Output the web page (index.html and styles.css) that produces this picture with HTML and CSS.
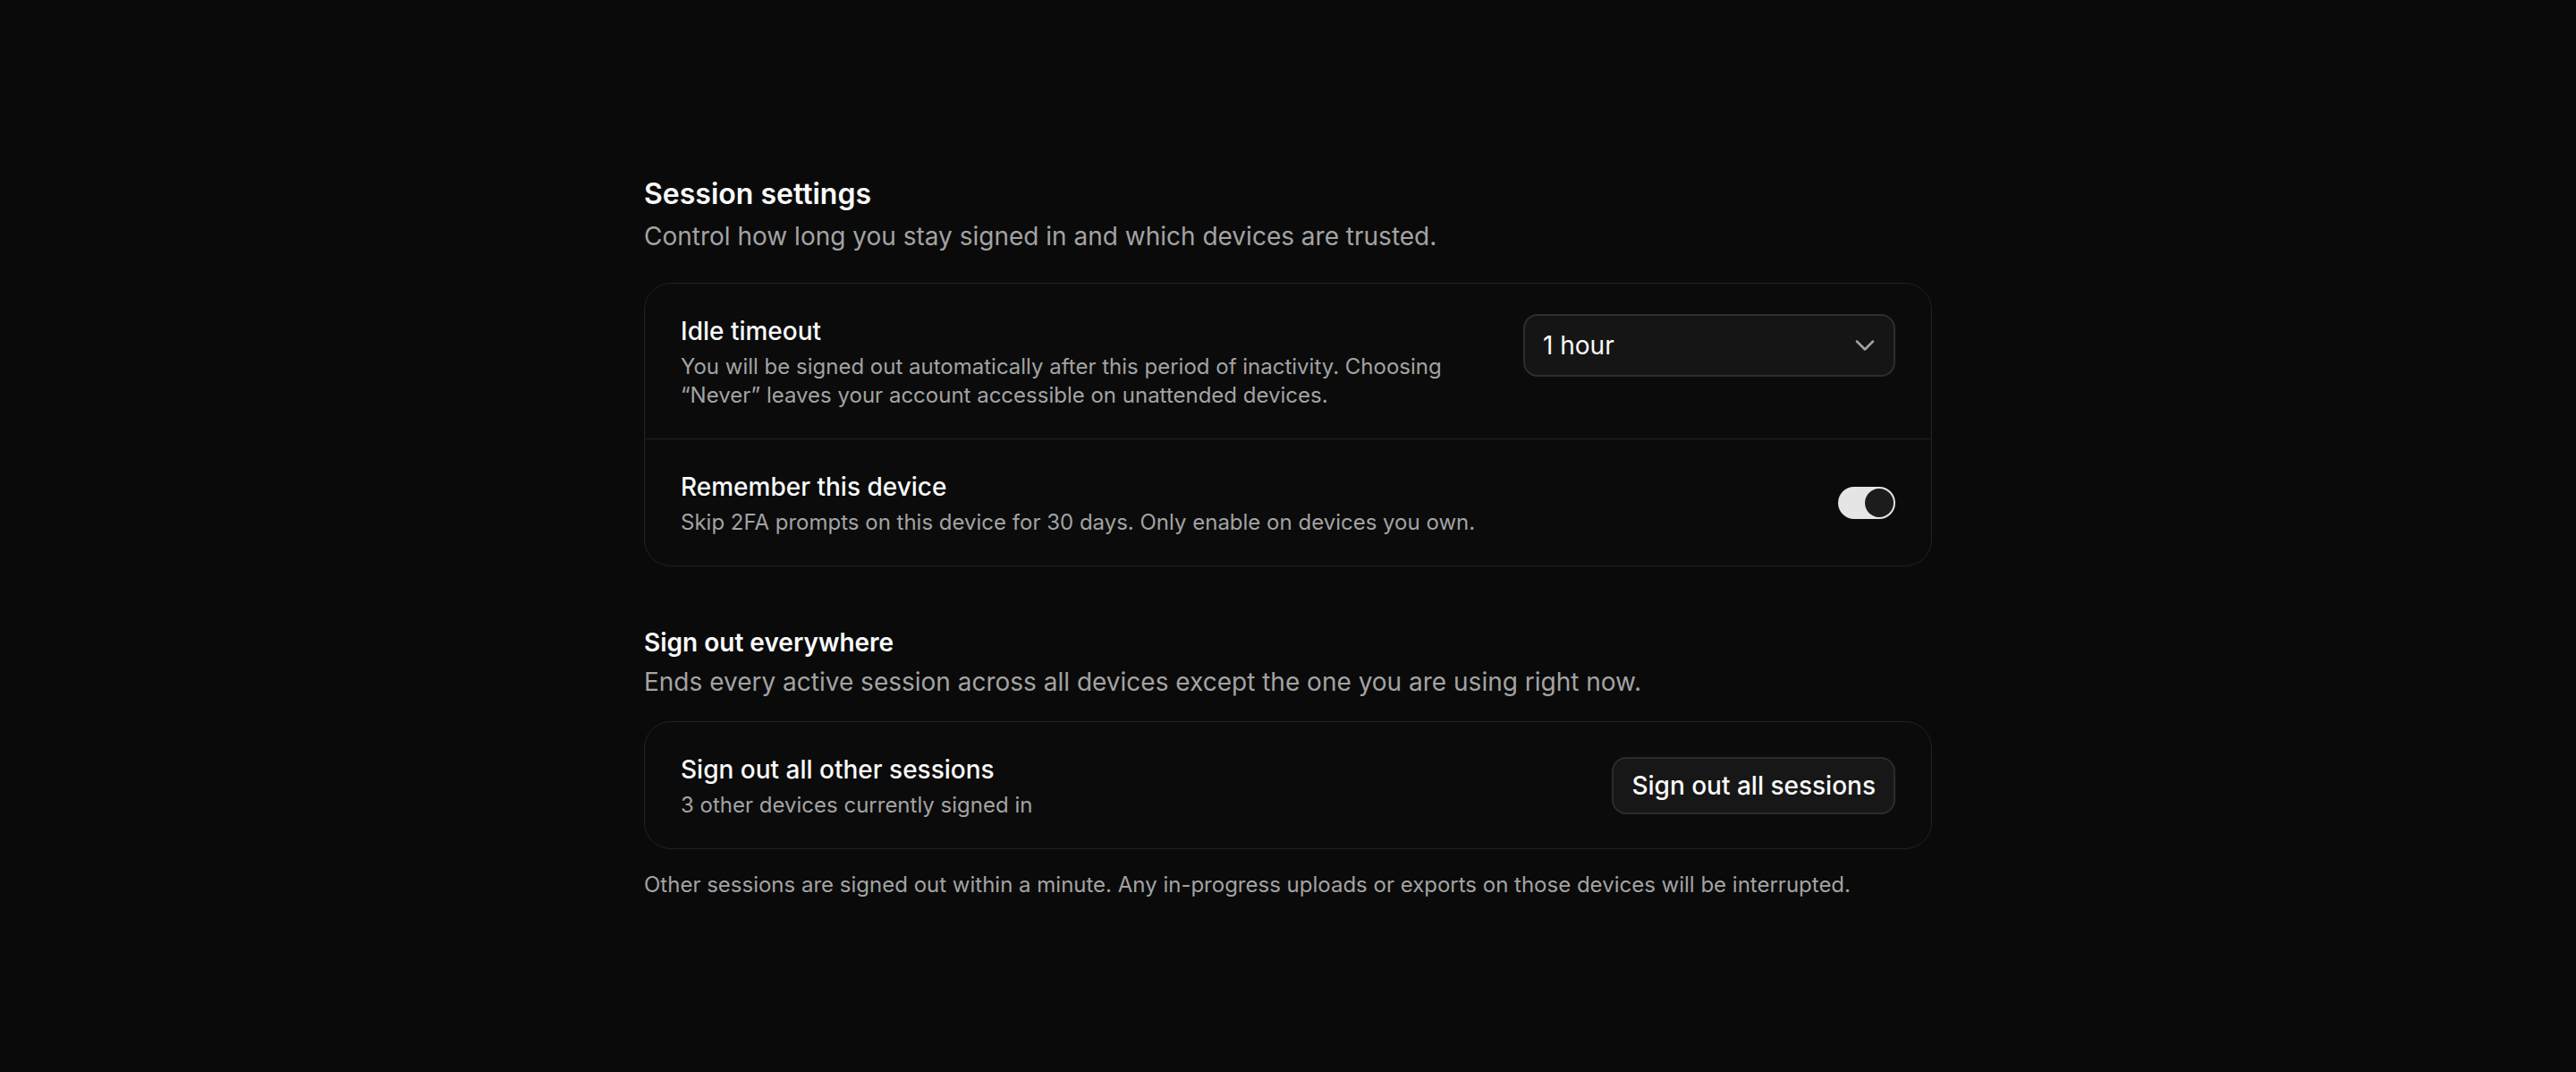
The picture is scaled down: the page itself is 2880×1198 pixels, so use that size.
FILE: index.html
```html
<!DOCTYPE html>
<html lang="en">
<head>
    <meta charset="UTF-8">
    <meta name="viewport" content="width=device-width, initial-scale=1.0">
    <title>Session settings</title>
    <link rel="stylesheet" href="styles.css">
</head>
<body>
<div class="page">

    <section class="section">
        <div class="section-head first">
            <h1 class="section-title">Session settings</h1>
            <p class="section-sub">Control how long you stay signed in and which devices are trusted.</p>
        </div>

        <div class="card">
            <div class="row row-top">
                <div class="row-text">
                    <div class="row-title">Idle timeout</div>
                    <div class="row-desc">You will be signed out automatically after this period of inactivity. Choosing “Never” leaves your account accessible on unattended devices.</div>
                </div>
                <div class="select">
                    <span>1 hour</span>
                    <svg width="36" height="36" viewBox="0 0 24 24" fill="none" stroke="currentColor" stroke-width="1.7" stroke-linecap="round" stroke-linejoin="round"><path d="m6 9 6 6 6-6"/></svg>
                </div>
            </div>
            <div class="row">
                <div class="row-text">
                    <div class="row-title">Remember this device</div>
                    <div class="row-desc">Skip 2FA prompts on this device for 30 days. Only enable on devices you own.</div>
                </div>
                <div class="toggle on"><span class="knob"></span></div>
            </div>
        </div>
    </section>

    <section class="section second">
        <div class="section-head">
            <h2 class="section-title small">Sign out everywhere</h2>
            <p class="section-sub">Ends every active session across all devices except the one you are using right now.</p>
        </div>

        <div class="card">
            <div class="row">
                <div class="row-text">
                    <div class="row-title">Sign out all other sessions</div>
                    <div class="row-desc">3 other devices currently signed in</div>
                </div>
                <button class="btn">Sign out all sessions</button>
            </div>
        </div>

        <p class="note">Other sessions are signed out within a minute. Any in-progress uploads or exports on those devices will be interrupted.</p>
    </section>

</div>
</body>
</html>
```

FILE: styles.css
```css
html {
    height: 100%;
}

body {
    margin: 0;
    background-color: #0a0a0a;
    color: #fafafa;
    font-family: Inter, "Noto Sans", sans-serif;
}

.page {
    max-width: 1440px;
    margin: 0 auto;
    padding: 193px 0 120px;
}

.section.second {
    margin-top: 64px;
}

.section-head {
    margin-bottom: 23px;
}

.section-head.first {
    margin-bottom: 31px;
}

.section-title {
    margin: 0 0 2px;
    font-size: 32px;
    line-height: 48px;
    font-weight: 600;
}

.section-title.small {
    font-size: 28px;
    line-height: 42px;
}

.section-sub {
    margin: 0;
    font-size: 28px;
    line-height: 42px;
    color: #a3a3a3;
}

.card {
    border: 1px solid #222;
    border-radius: 30px;
    background-color: #0b0b0b;
}

.row {
    display: flex;
    align-items: center;
    gap: 48px;
    padding: 32px 40px;
}

.row + .row {
    border-top: 1px solid #222;
}

.row-top {
    align-items: flex-start;
}

.row-text {
    flex: 1;
}

.row-title {
    font-size: 28px;
    line-height: 42px;
    font-weight: 500;
    margin-bottom: 3px;
}

.row-desc {
    font-size: 24px;
    line-height: 32px;
    color: #a3a3a3;
}

.select {
    display: flex;
    align-items: center;
    justify-content: space-between;
    box-sizing: border-box;
    width: 416px;
    height: 70px;
    margin-top: 2px;
    padding: 0 14px 0 20px;
    background-color: #151515;
    border: 2px solid #2e2e2e;
    border-radius: 16px;
    font-size: 28px;
    color: #fafafa;
}

.select svg {
    color: #a3a3a3;
}

.toggle {
    position: relative;
    width: 64px;
    height: 36px;
    border-radius: 18px;
    background-color: #3a3a3a;
    flex-shrink: 0;
}

.toggle.on {
    background-color: #e5e5e5;
}

.knob {
    position: absolute;
    top: 2px;
    left: 2px;
    width: 32px;
    height: 32px;
    border-radius: 50%;
    background-color: #1c1c1c;
}

.toggle.on .knob {
    left: 30px;
}

.btn {
    padding: 9px 20px;
    background-color: #171717;
    color: #fafafa;
    border: 2px solid #2c2c2c;
    border-radius: 16px;
    font-family: inherit;
    font-size: 28px;
    line-height: 42px;
    font-weight: 500;
    cursor: pointer;
}

.note {
    margin: 24px 0 0;
    font-size: 24px;
    line-height: 32px;
    color: #a3a3a3;
}
```
